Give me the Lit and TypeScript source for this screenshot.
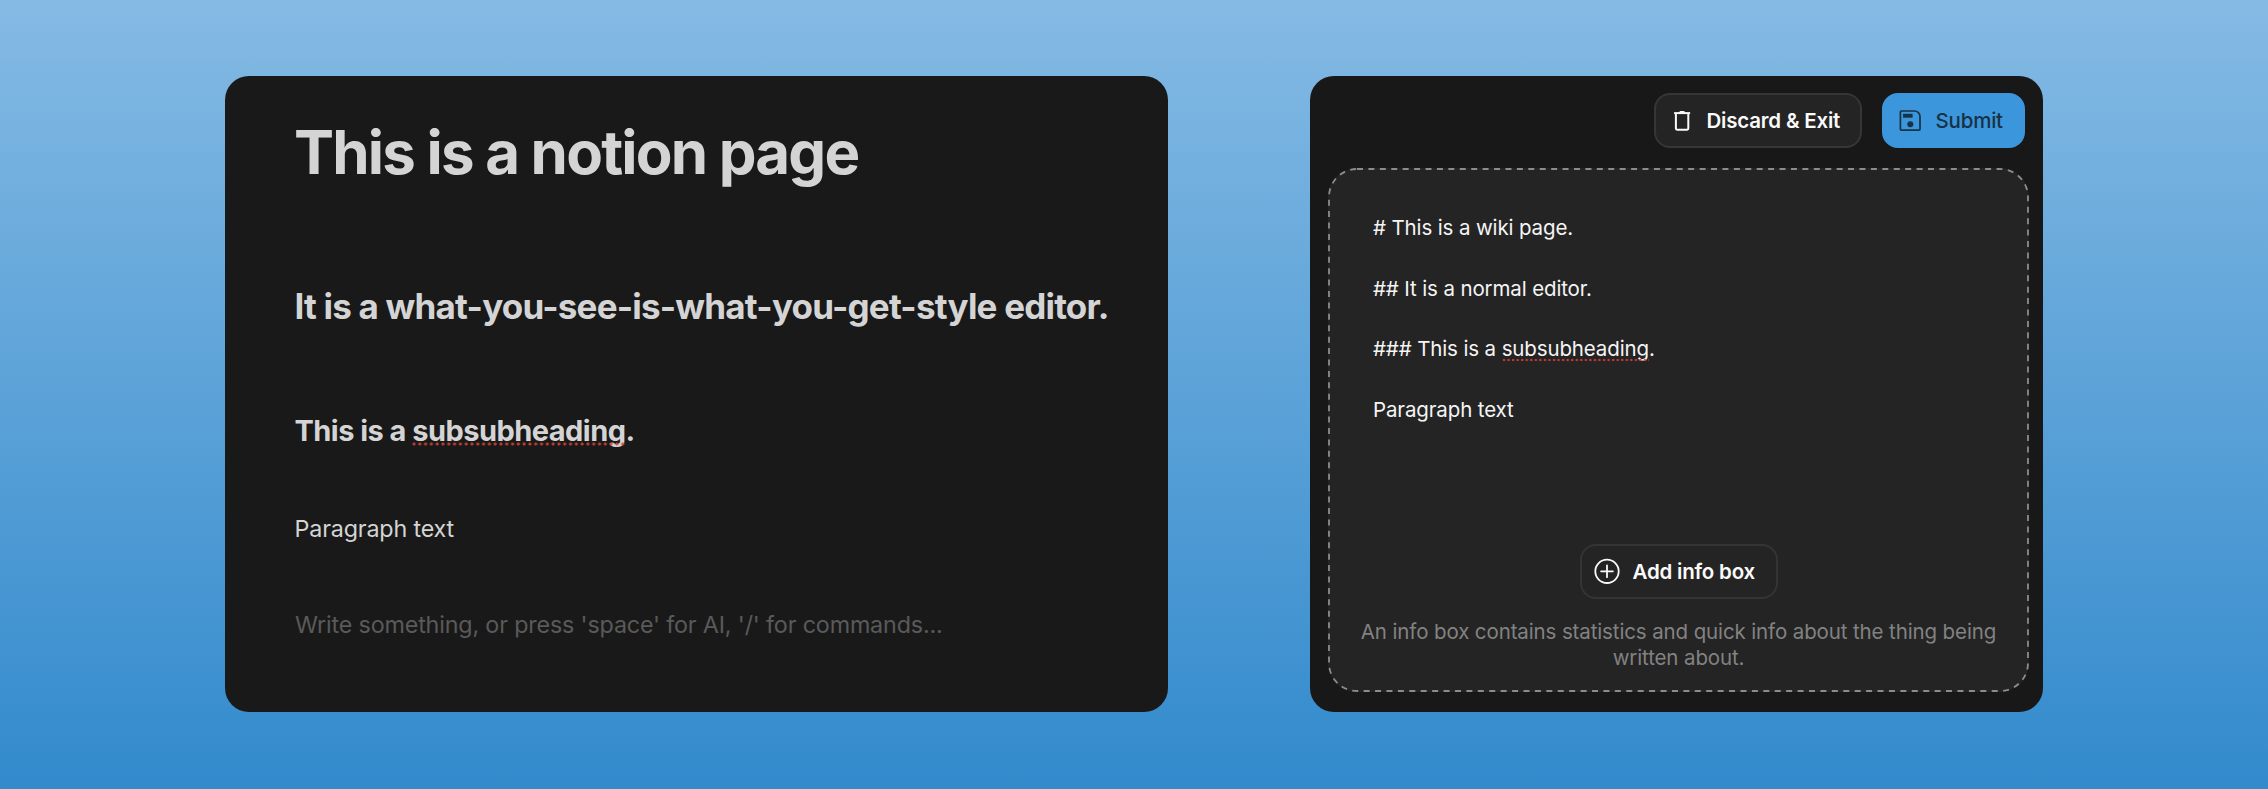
import { LitElement, html, css } from "lit";
import { customElement } from "lit/decorators.js";

const base = css`
  * { box-sizing: border-box; margin: 0; }
`;

@customElement("notion-card")
class NotionCard extends LitElement {
  static styles = [base, css`
    :host {
      display: block;
      box-sizing: border-box;
      width: 943px;
      height: 636px;
      padding: 39.5px 0 0 69px;
      border-radius: 24px;
      background: #191919;
      color: #d4d4d4;
      white-space: nowrap;
    }
    .h1 { font-size: 60px; line-height: 72px; font-weight: 700; letter-spacing: -1.8px; }
    .h2 { margin-top: 96px; font-size: 35px; line-height: 44px; font-weight: 650; letter-spacing: -0.79px; padding-left: 0.5px; }
    .h3 { margin-top: 84px; font-size: 29px; line-height: 38px; font-weight: 650; letter-spacing: -0.53px; padding-left: 0.5px; }
    .p { margin-top: 63px; font-size: 23.3px; line-height: 32px; font-weight: 420; letter-spacing: -0.16px; padding-left: 0.5px; }
    .hint { margin-top: 64px; color: #5a5a5a; padding-left: 1px; }
    .miss { position: relative; }
    .miss::after {
      content: "";
      position: absolute;
      left: 0;
      right: 0;
      bottom: 1.5px;
      height: 4px;
      background: radial-gradient(circle at 2px 2px, rgba(214, 66, 50, 0.85) 1.2px, transparent 1.9px) 0 0 / 5.8px 4px repeat-x;
    }
  `];
  render() {
    return html`
      <h1 class="h1">This is a notion page</h1>
      <h2 class="h2">It is a what-you-see-is-what-you-get-style editor.</h2>
      <h3 class="h3">This is a <span class="miss">subsubheading</span>.</h3>
      <p class="p">Paragraph text</p>
      <p class="p hint">Write something, or press 'space' for AI, '/' for commands...</p>
    `;
  }
}

@customElement("wiki-card")
class WikiCard extends LitElement {
  static styles = [base, css`
    :host {
      display: flex;
      flex-direction: column;
      box-sizing: border-box;
      width: 733px;
      height: 636px;
      padding: 17px 14px 20px 18px;
      border-radius: 24px;
      background: #181818;
      color: #f5f5f5;
      font-size: 20.5px;
      font-weight: 430;
      letter-spacing: -0.13px;
      white-space: nowrap;
    }
    .bar { display: flex; justify-content: flex-end; gap: 20px; padding-right: 4px; }
    .btn {
      display: flex;
      align-items: center;
      height: 55px;
      border: 2px solid #363636;
      border-radius: 16px;
      background: #242424;
      color: #fafafa;
      font: inherit;
      font-weight: 600;
      letter-spacing: -0.2px;
      padding: 0;
      line-height: 28px;
    }
    .btn svg { flex: none; display: block; }
    .discard { width: 208px; padding-left: 14.5px; gap: 12px; }
    .submit { width: 143px; padding-left: 13px; gap: 10.5px; background: #3b96dc; border-color: #3b96dc; color: #183245; font-weight: 550; }
    .add { width: 198px; padding-left: 11px; gap: 12px; border-color: #343434; }
    .editor {
      position: relative;
      display: flex;
      flex-direction: column;
      align-items: center;
      flex: 1;
      margin-top: 20px;
      padding: 30px 20px 22px;
      border-radius: 29px;
      background: #242424;
    }
    .outline { position: absolute; inset: 0; width: 100%; height: 100%; pointer-events: none; }
    .lines { align-self: stretch; flex: 1; padding-left: 25px; line-height: 60.67px; }
    .info {
      width: 660px;
      margin-top: 20px;
      line-height: 25.4px;
      text-align: center;
      white-space: normal;
      letter-spacing: -0.12px;
      color: #828282;
    }
    .miss { position: relative; }
    .miss::after {
      content: "";
      position: absolute;
      left: 0;
      right: 0;
      bottom: -0.5px;
      height: 4px;
      background: radial-gradient(circle at 2px 2px, rgba(214, 60, 50, 0.9) 0.9px, transparent 1.6px) 0 0 / 4.55px 4px repeat-x;
    }
  `];
  render() {
    return html`
      <div class="bar">
        <button class="btn discard">
          <svg width="24" height="24" viewBox="0 0 24 24" fill="none" stroke="currentColor" stroke-width="2">
            <path d="M4.9 5v14.6c0 .7.4 1.1 1.1 1.1h10.2c.7 0 1.1-.4 1.1-1.1V5" />
            <path d="M3.1 4.1h16" />
            <path d="M7.6 4.2 9 2h4.2l1.4 2.2Z" fill="currentColor" stroke="none" />
          </svg>
          <span>Discard &amp; Exit</span>
        </button>
        <button class="btn submit">
          <svg width="28" height="28" viewBox="0 0 28 28" fill="none" stroke="currentColor" stroke-width="1.7">
            <path d="M4.3 4h13.2c3 0 5.5 2.3 5.5 5.4v12.9c0 .6-.3.9-.9.9H4.3c-.6 0-.9-.3-.9-.9V4.9c0-.6.3-.9.9-.9Z" />
            <path d="M6 6.8h9.6v3.9H6z" fill="currentColor" stroke="none" />
            <circle cx="13.3" cy="17.2" r="3" fill="currentColor" stroke="none" />
          </svg>
          <span>Submit</span>
        </button>
      </div>
      <div class="editor">
        <svg class="outline" viewBox="0 0 701 524">
          <rect x="1" y="1" width="699" height="522" rx="28" fill="none" stroke="#8c8c8c" stroke-width="1.8" stroke-dasharray="6 5.42" />
        </svg>
        <div class="lines">
          <p># This is a wiki page.</p>
          <p>## It is a normal editor.</p>
          <p>### This is a <span class="miss">subsubheading</span>.</p>
          <p>Paragraph text</p>
        </div>
        <button class="btn add">
          <svg width="28" height="28" viewBox="0 0 28 28" fill="none" stroke="currentColor" stroke-width="1.8">
            <circle cx="14" cy="13.3" r="11.7" />
            <path d="M14 7.4v11.8M8.1 13.3h11.8" stroke-linecap="round" />
          </svg>
          <span>Add info box</span>
        </button>
        <p class="info">An info box contains statistics and quick info about the thing being written about.</p>
      </div>
    `;
  }
}

@customElement("app-root")
class AppRoot extends LitElement {
  static styles = css`
    :host {
      display: flex;
      align-items: flex-start;
      gap: 142px;
      box-sizing: border-box;
      width: 2268px;
      height: 789px;
      padding: 76px 225px 0;
      background: linear-gradient(#85bae4, #328acc);
      font-family: Inter, sans-serif;
    }
  `;
  render() {
    return html`<notion-card></notion-card><wiki-card></wiki-card>`;
  }
}
